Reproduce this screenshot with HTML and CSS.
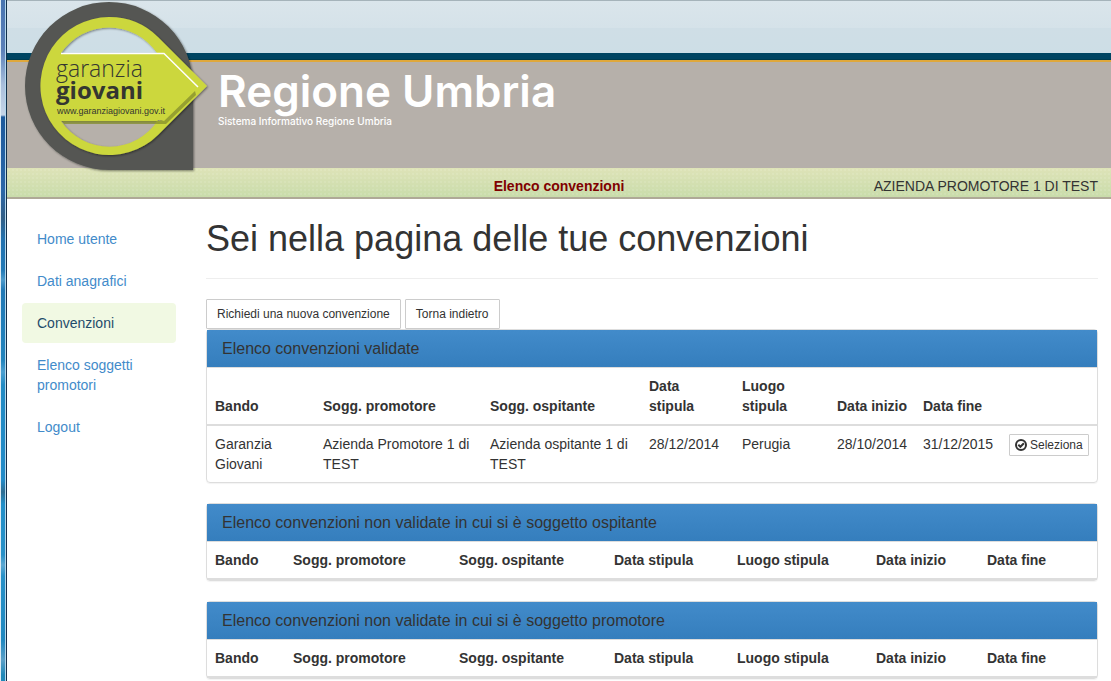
FILE: index.html
```html
<!DOCTYPE html>
<html lang="it">
<head>
<meta charset="utf-8">
<meta name="viewport" content="width=device-width, initial-scale=1">
<title>Elenco convenzioni</title>
<link rel="stylesheet" href="styles.css">
</head>
<body>
<div class="window-edge"></div>
<div class="page">
  <header class="banner">
    <svg class="logo" viewBox="0 0 200 180" role="img" aria-label="Garanzia Giovani">
      <defs>
        <filter id="shade" x="-10%" y="-10%" width="120%" height="120%">
          <feDropShadow dx="1" dy="1" stdDeviation="1" flood-color="#000" flood-opacity="0.45"/>
        </filter>
      </defs>
      <path filter="url(#shade)" fill="#555753" fill-rule="evenodd" d="M102 2a84 84 0 1 0 0 168H186V86A84 84 0 0 0 102 2ZM102 24a62 62 0 1 1 0 124a62 62 0 1 1 0-124Z"/>
      <path filter="url(#shade)" fill="#ccd73c" fill-rule="evenodd" d="M102 17a69 69 0 1 0 49 118L200 86L151 37A69 69 0 0 0 102 17ZM54 53a58 58 0 0 1 96 0ZM54 121H157L151 120A58 58 0 0 1 54 121Z"/>
      <path fill="#848d2c" opacity="0.75" d="M55 121H157L188 91L189 95L159 124H57Z"/>
      <path fill="none" stroke="#fff" stroke-width="1.5" d="M54 53.500H157L191 87"/>
      <text class="logo-light" x="49" y="77">garanzia</text>
      <text class="logo-bold" x="49" y="99">giovani</text>
      <text class="logo-url" x="50" y="114">www.garanziagiovani.gov.it</text>
    </svg>
    <div class="brand">
      <div class="brand-name">Regione Umbria</div>
      <div class="brand-sub">Sistema Informativo Regione Umbria</div>
    </div>
  </header>
  <div class="statusbar">
    <strong class="section">Elenco convenzioni</strong>
    <span class="user">AZIENDA PROMOTORE 1 DI TEST</span>
  </div>
  <div class="content">
    <nav class="menu">
      <a href="#">Home utente</a>
      <a href="#">Dati anagrafici</a>
      <a href="#" class="active" aria-current="page">Convenzioni</a>
      <a href="#">Elenco soggetti promotori</a>
      <a href="#">Logout</a>
    </nav>
    <main class="main">
      <h1>Sei nella pagina delle tue convenzioni</h1>
      <div class="actions">
        <button type="button" class="btn">Richiedi una nuova convenzione</button>
        <button type="button" class="btn">Torna indietro</button>
      </div>
      <section class="panel">
        <h2>Elenco convenzioni validate</h2>
        <table class="validated">
          <colgroup><col class="w108"><col class="w167"><col class="w159"><col class="w93"><col class="w95"><col class="w86"><col class="w86"><col class="w96"></colgroup>
          <thead>
            <tr><th>Bando</th><th>Sogg. promotore</th><th>Sogg. ospitante</th><th>Data stipula</th><th>Luogo stipula</th><th>Data inizio</th><th>Data fine</th><th></th></tr>
          </thead>
          <tbody>
            <tr>
              <td>Garanzia Giovani</td><td>Azienda Promotore 1 di TEST</td><td>Azienda ospitante 1 di TEST</td><td>28/12/2014</td><td>Perugia</td><td>28/10/2014</td><td>31/12/2015</td>
              <td><button type="button" class="btn btn-small"><svg class="check" viewBox="0 0 12 12" aria-hidden="true"><circle cx="6" cy="6" r="5"/><path d="M3.300 5.700L5.400 7.800L8.900 4.300"/></svg>Seleziona</button></td>
            </tr>
          </tbody>
        </table>
      </section>
      <section class="panel">
        <h2>Elenco convenzioni non validate in cui si è soggetto ospitante</h2>
        <table>
          <colgroup><col class="w78"><col class="w166"><col class="w155"><col class="w123"><col class="w139"><col class="w111"><col class="w118"></colgroup>
          <thead>
            <tr><th>Bando</th><th>Sogg. promotore</th><th>Sogg. ospitante</th><th>Data stipula</th><th>Luogo stipula</th><th>Data inizio</th><th>Data fine</th></tr>
          </thead>
        </table>
      </section>
      <section class="panel">
        <h2>Elenco convenzioni non validate in cui si è soggetto promotore</h2>
        <table>
          <colgroup><col class="w78"><col class="w166"><col class="w155"><col class="w123"><col class="w139"><col class="w111"><col class="w118"></colgroup>
          <thead>
            <tr><th>Bando</th><th>Sogg. promotore</th><th>Sogg. ospitante</th><th>Data stipula</th><th>Luogo stipula</th><th>Data inizio</th><th>Data fine</th></tr>
          </thead>
        </table>
      </section>
    </main>
  </div>
</div>
</body>
</html>
```
FILE: styles.css
```css
* { box-sizing: border-box; }

body {
  display: flex;
  min-height: 100vh;
  margin: 0;
  background: #fff;
  color: #333;
  font: 14px/20px "Liberation Sans", Arial, sans-serif;
}

.window-edge {
  flex: none;
  width: 7px;
  border-left: 1px solid #dcebf5;
  border-right: 1px solid #12304c;
  box-shadow: inset -1px 0 #b4d7ec;
  background: linear-gradient(#4874b0 0, #5b80b8 50px, #a9bfdc 85px, #c5d5e8 115px, #1d5a9c 117px, #2b67a8 190px, #315f87 218px, #2272b0 240px, #2179b6 270px, #4c9acb 280px, #2179b6 290px, #2284bd 360px, #4c9fd0 372px, #228bc4 385px, #228bc8 480px, #2f6d92 492px, #228fc9 504px, #2891c8 555px, #5ea8d2 565px, #2891c8 576px, #2088c0 640px, #5ca0c8 660px, #2088b8 675px);
}

.page { flex: 1; min-width: 0; }

.banner {
  position: relative;
  height: 168px;
  padding: 70px 0 0 211px;
  background: linear-gradient(#a5b3ba 0 1px, #dae5eb 1px, #d5e2e9 28px, #cfdee6 28px, #cddee6 53px, #004562 53px 59px, #003c50 59px 60px, #dfa83c 60px 62px, #b6b0aa 62px);
}

.logo {
  position: absolute;
  left: 0;
  top: 0;
  width: 200px;
  height: 180px;
  overflow: visible;
}

.logo text { fill: #343631; font-family: "Open Sans", sans-serif; }
.logo .logo-light { font-size: 23px; font-weight: 300; }
.logo .logo-bold { font-size: 24px; font-weight: 700; }
.logo .logo-url { font-family: "Liberation Sans", Arial, sans-serif; font-size: 9px; }

.brand { color: #fff; font-family: Inter, sans-serif; }
.brand-name { font-size: 44px; line-height: 43px; font-weight: 600; }
.brand-sub { font-size: 10px; line-height: 16px; font-weight: 500; }

.statusbar {
  display: grid;
  grid-template-columns: 1fr auto 1fr;
  height: 31px;
  padding: 8px 13px 0;
  border-bottom: 2px solid #afa997;
  background:
    radial-gradient(#ffffff18 1px, transparent 1px) 0 0 / 4px 4px,
    linear-gradient(#dee3b8, #c9dcaa);
}

.section { grid-column: 2; color: #800000; }
.user { justify-self: end; white-space: nowrap; }

.content {
  display: flex;
  gap: 30px;
  padding: 20px 13px 0 15px;
}

.menu {
  display: flex;
  flex: none;
  flex-direction: column;
  gap: 2px;
  width: 154px;
}

.menu a {
  padding: 10px 15px;
  border-radius: 4px;
  color: #428bca;
  text-decoration: none;
}

.menu .active { background: #f1f9e3; color: #1f4c6b; }

.main { flex: 1; min-width: 0; }

h1 {
  margin: 0 0 20px;
  padding-bottom: 19px;
  border-bottom: 1px solid #eee;
  font-size: 36px;
  line-height: 40px;
  font-weight: 400;
}

.actions { display: flex; gap: 4px; }

.btn {
  padding: 5px 10px;
  border: 1px solid #ccc;
  border-radius: 1px;
  background: #fff;
  color: #333;
  font: 12px/18px "Liberation Sans", Arial, sans-serif;
  white-space: nowrap;
}

.btn-small {
  display: inline-flex;
  align-items: center;
  gap: 3px;
  padding: 1px 5px;
}

.check {
  width: 12px;
  height: 12px;
  fill: none;
  stroke: #333;
  stroke-width: 2;
}

.panel {
  margin-bottom: 20px;
  border: 1px solid #ddd;
  border-radius: 4px;
  box-shadow: 0 1px 1px #0000000d;
}

.panel:last-child { margin-bottom: 0; }

h2 {
  margin: 0;
  padding: 10px 15px 9px;
  border-bottom: 1px solid #ddd;
  background: linear-gradient(#428bca, #357ebd);
  font-size: 16px;
  line-height: 18px;
  font-weight: 400;
}

table { width: 100%; border-collapse: separate; border-spacing: 0; table-layout: fixed; }

th, td { padding: 8px; text-align: left; vertical-align: top; }
th { border-bottom: 2px solid #ddd; vertical-align: bottom; }
.validated td { height: 56px; }

.w78 { width: 78px; }
.w86 { width: 86px; }
.w93 { width: 93px; }
.w95 { width: 95px; }
.w96 { width: 96px; }
.w108 { width: 108px; }
.w111 { width: 111px; }
.w118 { width: 118px; }
.w123 { width: 123px; }
.w139 { width: 139px; }
.w155 { width: 155px; }
.w159 { width: 159px; }
.w166 { width: 166px; }
.w167 { width: 167px; }
```
